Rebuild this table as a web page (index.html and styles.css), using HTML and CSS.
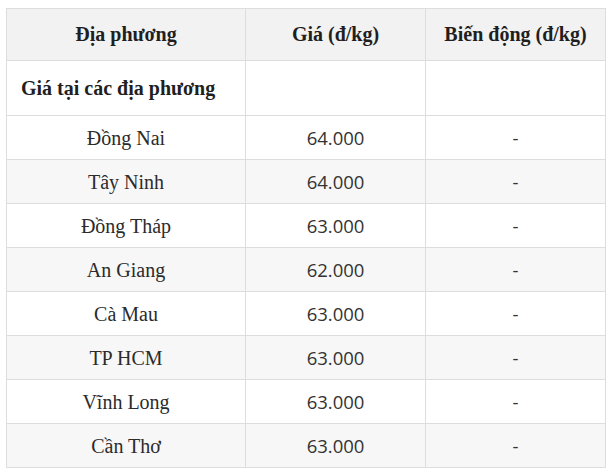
FILE: index.html
```html
<!DOCTYPE html>
<html lang="vi">
<head>
<meta charset="utf-8">
<link rel="stylesheet" href="styles.css">
</head>
<body>
<table class="price-table">
  <colgroup>
    <col class="col-place">
    <col class="col-price">
    <col class="col-change">
  </colgroup>
  <thead>
    <tr class="head-row">
      <th>Địa phương</th>
      <th>Giá (đ/kg)</th>
      <th>Biến động (đ/kg)</th>
    </tr>
  </thead>
  <tbody>
    <tr class="group-row">
      <td class="group-title">Giá tại các địa phương</td>
      <td></td>
      <td></td>
    </tr>
    <tr class="row"><td class="place">Đồng Nai</td><td class="num">64.000</td><td class="num">-</td></tr>
    <tr class="row"><td class="place">Tây Ninh</td><td class="num">64.000</td><td class="num">-</td></tr>
    <tr class="row"><td class="place">Đồng Tháp</td><td class="num">63.000</td><td class="num">-</td></tr>
    <tr class="row"><td class="place">An Giang</td><td class="num">62.000</td><td class="num">-</td></tr>
    <tr class="row"><td class="place">Cà Mau</td><td class="num">63.000</td><td class="num">-</td></tr>
    <tr class="row"><td class="place">TP HCM</td><td class="num">63.000</td><td class="num">-</td></tr>
    <tr class="row"><td class="place">Vĩnh Long</td><td class="num">63.000</td><td class="num">-</td></tr>
    <tr class="row"><td class="place">Cần Thơ</td><td class="num">63.000</td><td class="num">-</td></tr>
  </tbody>
</table>
</body>
</html>
```
FILE: styles.css
```css
html, body {
  margin: 0;
  padding: 0;
  background: #ffffff;
}
body {
  padding: 8px 0 0 6px;
  font-family: "Liberation Serif", "DejaVu Serif", serif;
  color: #2b2b2b;
}
.price-table {
  border-collapse: collapse;
  width: 599px;
  table-layout: fixed;
}
.col-place { width: 239px; }
.col-price { width: 180px; }
.col-change { width: 180px; }
.price-table th,
.price-table td {
  border: 1px solid #dddddd;
  padding: 0;
  text-align: center;
  vertical-align: middle;
}
.head-row {
  height: 52px;
  background: #f2f2f2;
}
.head-row th {
  font-size: 20px;
  font-weight: bold;
  color: #1f1f1f;
}
.group-row {
  height: 55px;
}
.price-table .group-title {
  text-align: left;
  padding-left: 14px;
  font-size: 20px;
  font-weight: bold;
  color: #1f1f1f;
}
.row {
  height: 44px;
}
.row:nth-child(odd) {
  background: #f7f7f7;
}
.price-table .place {
  font-size: 20px;
  color: #2b2b2b;
  padding-top: 1px;
}
.num {
  font-family: "Open Sans", "Liberation Sans", sans-serif;
  font-size: 18.5px;
  color: #333333;
}
```
